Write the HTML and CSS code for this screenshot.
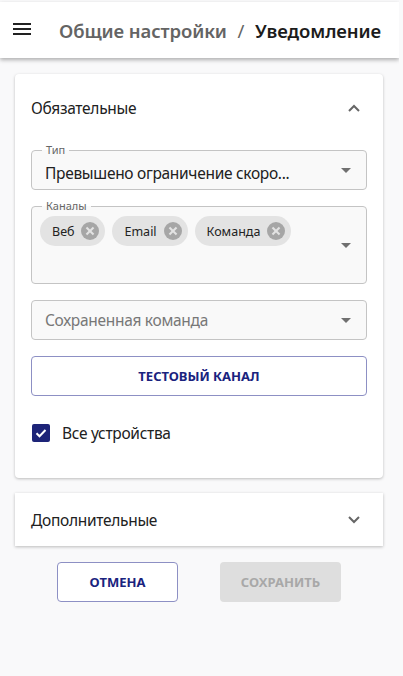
FILE: index.html
```html
<!DOCTYPE html>
<html lang="ru">
<head>
  <meta charset="UTF-8">
  <meta name="viewport" content="width=device-width, initial-scale=1.0">
  <title>Уведомление</title>
  <link rel="stylesheet" href="styles.css">
</head>
<body>

  <!-- Top bar with menu and breadcrumbs -->
  <header class="topbar">
    <button class="menu-btn" aria-label="Меню">
      <svg width="20" height="14" viewBox="0 0 20 14"><path d="M1 1h18M1 6h18M1 11h18" stroke="#222" stroke-width="2"/></svg>
    </button>
    <div class="crumbs">
      <span class="crumb-parent">Общие настройки</span>
      <span class="crumb-sep">/</span>
      <span class="crumb-current">Уведомление</span>
    </div>
  </header>

  <main class="content">

    <!-- Required settings -->
    <section class="panel">
      <div class="panel-head">
        <span>Обязательные</span>
        <svg class="chevron" width="12" height="8" viewBox="0 0 12 8"><path d="M1 7l5-5 5 5" fill="none" stroke="#666" stroke-width="2"/></svg>
      </div>

      <div class="panel-body">
        <div class="field">
          <label class="field-label">Тип</label>
          <span class="field-value">Превышено ограничение скоро...</span>
          <span class="arrow"></span>
        </div>

        <div class="field field-tall">
          <label class="field-label">Каналы</label>
          <div class="chips">
            <span class="chip">Веб <i class="chip-del"></i></span>
            <span class="chip">Email <i class="chip-del"></i></span>
            <span class="chip">Команда <i class="chip-del"></i></span>
          </div>
          <span class="arrow"></span>
        </div>

        <div class="field">
          <span class="field-value placeholder">Сохраненная команда</span>
          <span class="arrow"></span>
        </div>

        <button class="btn btn-outline btn-wide">Тестовый канал</button>

        <label class="check-row">
          <span class="checkbox">
            <svg width="14" height="14" viewBox="0 0 14 14"><path d="M2.5 7.2l3 3 6-6.2" fill="none" stroke="#fff" stroke-width="2"/></svg>
          </span>
          Все устройства
        </label>
      </div>
    </section>

    <!-- Optional settings (collapsed) -->
    <section class="panel panel-collapsed">
      <div class="panel-head">
        <span>Дополнительные</span>
        <svg class="chevron" width="12" height="8" viewBox="0 0 12 8"><path d="M1 1l5 5 5-5" fill="none" stroke="#666" stroke-width="2"/></svg>
      </div>
    </section>

    <div class="actions">
      <button class="btn btn-outline">Отмена</button>
      <button class="btn btn-disabled" disabled>Сохранить</button>
    </div>

  </main>

</body>
</html>
```

FILE: styles.css
```css
/* Page */
body {
  margin: 0;
  padding-top: 2px;
  width: 399px;
  min-height: 674px;
  background: #f9f9fa;
  font-family: "Noto Sans", "Open Sans", sans-serif;
  color: #212121;
}

/* Top bar */
.topbar {
  display: flex;
  align-items: center;
  height: 56px;
  background: #fff;
  box-shadow: 0 2px 4px rgba(0, 0, 0, 0.3);
}

.menu-btn {
  display: flex;
  margin: 0 0 0 12px;
  padding: 0;
  border: none;
  background: none;
}

.crumbs {
  margin-left: 27px;
  font-size: 18.5px;
  font-weight: 600;
  letter-spacing: -0.1px;
  white-space: nowrap;
}

.crumb-parent {
  color: #646464;
}

.crumb-sep {
  color: #646464;
  font-weight: 400;
  margin: 0 6px;
}

.crumb-current {
  color: #1c1c1c;
}

/* Content */
.content {
  padding: 16px 16px 0 15px;
}

.panel {
  background: #fff;
  border-radius: 4px;
  box-shadow: 0 1px 3px rgba(0, 0, 0, 0.25);
}

.panel-collapsed {
  margin-top: 15px;
  border-radius: 0;
}

.panel-head {
  display: flex;
  align-items: center;
  justify-content: space-between;
  height: 68px;
  padding: 0 23px 0 16px;
  font-size: 15.5px;
  letter-spacing: -0.3px;
}

.panel-collapsed .panel-head {
  height: 53px;
}

.panel-body {
  display: flex;
  flex-direction: column;
  gap: 16px;
  padding: 8px 16px 24px;
}

/* Outlined select fields */
.field {
  position: relative;
  display: flex;
  align-items: center;
  height: 38px;
  padding: 0 15px 0 13px;
  border: 1px solid #c4c4c4;
  border-radius: 4px;
  background: #f9f9f9;
}

.field-tall {
  height: 76px;
  padding-left: 8px;
}

.field-label {
  position: absolute;
  top: -8px;
  left: 10px;
  padding: 0 4px;
  font-size: 11px;
  line-height: 14px;
  color: #666;
  background: linear-gradient(#fff 50%, #f9f9f9 50%);
}

.field-value {
  flex: 1;
  padding-top: 6px;
  font-size: 15.5px;
  letter-spacing: -0.3px;
  white-space: nowrap;
}

.placeholder {
  padding-top: 0;
  color: #777;
}

.arrow {
  width: 0;
  height: 0;
  border-left: 5px solid transparent;
  border-right: 5px solid transparent;
  border-top: 5px solid #707070;
}

/* Chips */
.chips {
  flex: 1;
  align-self: flex-start;
  display: flex;
  gap: 7px;
  padding-top: 9px;
}

.chip {
  display: flex;
  align-items: center;
  gap: 7px;
  height: 30px;
  padding: 0 6px 0 12px;
  border-radius: 15px;
  background: #e3e3e3;
  font-size: 12.5px;
  color: #222;
}

.chip-del {
  position: relative;
  width: 18px;
  height: 18px;
  border-radius: 50%;
  background: #a6a6a6;
}

.chip-del::before,
.chip-del::after {
  content: "";
  position: absolute;
  left: 4px;
  top: 8px;
  width: 10px;
  height: 2px;
  background: #e3e3e3;
  transform: rotate(45deg);
}

.chip-del::after {
  transform: rotate(-45deg);
}

/* Buttons */
.btn {
  height: 40px;
  padding: 0 16px;
  border-radius: 4px;
  font-family: inherit;
  font-size: 13px;
  font-weight: 700;
  text-transform: uppercase;
  cursor: pointer;
}

.btn-outline {
  border: 1px solid #8d90c4;
  background: #fff;
  color: #1a237e;
}

.btn-wide {
  width: 100%;
}

.btn-disabled {
  border: none;
  background: #dedede;
  color: #a8a8a8;
  cursor: default;
}

/* Checkbox */
.check-row {
  display: flex;
  align-items: center;
  gap: 12px;
  height: 42px;
  padding-left: 1px;
  font-size: 15.5px;
  letter-spacing: -0.3px;
}

.checkbox {
  display: flex;
  align-items: center;
  justify-content: center;
  width: 18px;
  height: 18px;
  border-radius: 2px;
  background: #1d2478;
}

/* Bottom actions */
.actions {
  display: flex;
  justify-content: center;
  gap: 42px;
  margin-top: 16px;
}

.actions .btn {
  width: 121px;
}
```
